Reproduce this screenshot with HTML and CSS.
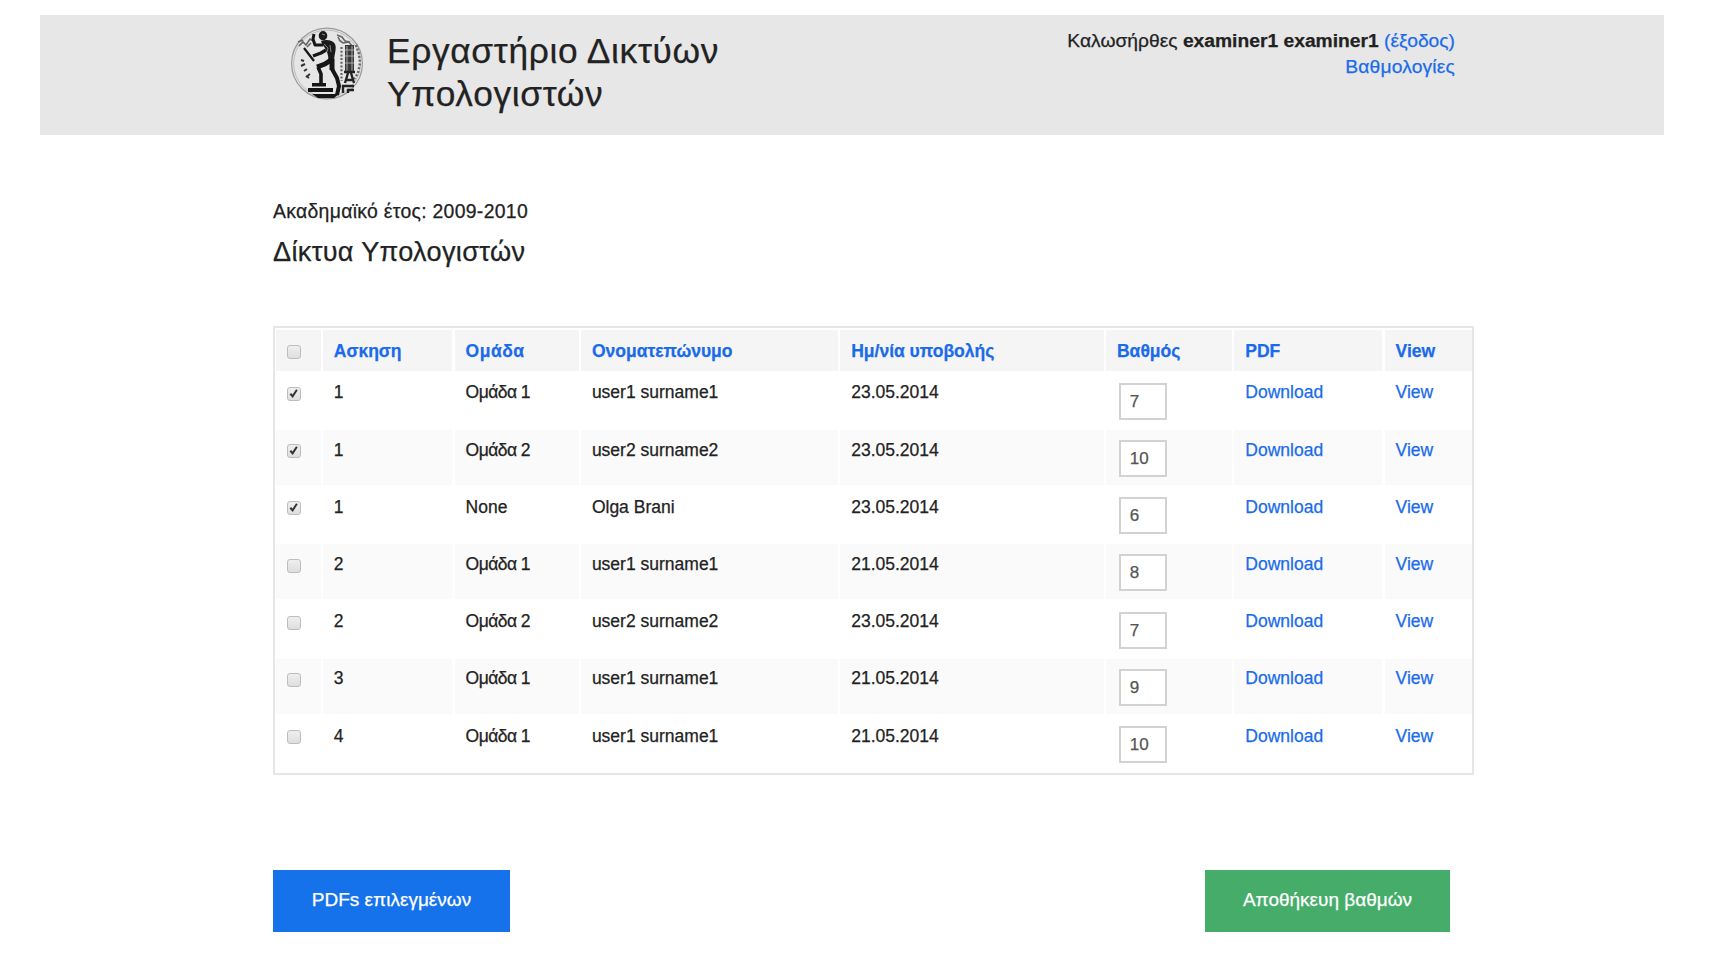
FILE: index.html
```html
<!DOCTYPE html>
<html lang="el">
<head>
<meta charset="utf-8">
<title>Εργαστήριο Δικτύων Υπολογιστών</title>
<link rel="stylesheet" href="styles.css">
</head>
<body>
<header class="masthead">
  <svg class="seal" viewBox="0 0 74 74" aria-hidden="true">
    <circle cx="37" cy="36.500" r="35.400" fill="#e6e6e6" stroke="#999" stroke-width="1.200"/>
    <circle cx="37" cy="36.500" r="33.400" fill="none" stroke="#b0b0b0" stroke-width=".8"/>
    <g fill="none" stroke="#666" stroke-width="1.600">
      <path d="M9 19l4-4 3 3 4-6 3 2M8 15l5-2M17 20l4-4M47 8l5 2 3 4 5 1M49 13l4 3 6-1 3 4M48 10l2 4"/>
      <path d="M11 33l3 1M11 39l4-2M14 44l3-2M16 50l4-3M19 51l-3-2" stroke="#333" stroke-width="2"/>
      <path d="M51.500 20v34" stroke-dasharray="2 1.700" stroke-width="2.200"/>
      <path d="M66 18l3 9 1 9-2 10-4 6" stroke-dasharray="2 1.800" stroke-width="2.400"/>
    </g>
    <path d="M55 18h9v27h-9z" fill="#383838"/>
    <path d="M57 19v25M62 19v25M55 23h9M55 29h9M55 36h9" stroke="#aaa" fill="none"/>
    <path d="M54 45h11M58 46l-3 10M61 46l3 10M55 53h9M53 66v-7h11M58 66v-3h6" stroke="#222" stroke-width="2.400" fill="none"/>
    <ellipse cx="33" cy="8.700" rx="4.300" ry="4.600" fill="#1b1b1b"/>
    <path d="M31 14c5-2 12-1 14 3 2 5-1 10-1 18l-6 2c1-6 0-10-2-14-1-3-4-5-5-9z" fill="#1b1b1b"/>
    <g fill="none" stroke="#161616" stroke-linejoin="round">
      <path d="M24 7l-1 5 2 6 8 0" stroke-width="3"/>
      <path d="M36 23l-5 3-8 3" stroke-width="3.400"/>
      <path d="M14 21l10 13" stroke-width="2.200"/>
      <path d="M41 33l-6 4-8 3" stroke-width="5"/>
      <path d="M28 40l3 7 0 9" stroke-width="3.600"/>
      <path d="M42 32l0 11" stroke-width="5"/>
      <path d="M42 42l5 9 2 8-2 9" stroke-width="4"/>
    </g>
    <path d="M22 56h14v3.500H22zM18 61h25v4H18zM22 67h27l-5 4H28z" fill="#151515"/>
    <path d="M34 17l4 4-1 4M40 18l1 7M32 7l3 1" stroke="#888" fill="none"/>
  </svg>
  <h1 class="site-title">Εργαστήριο Δικτύων<br>Υπολογιστών</h1>
  <div class="account">
    <div>Καλωσήρθες <b>examiner1 examiner1</b> <a href="#">(έξοδος)</a></div>
    <div><a class="grades-link" href="#">Βαθμολογίες</a></div>
  </div>
</header>
<main class="content">
  <p class="year">Ακαδημαϊκό έτος: 2009-2010</p>
  <h2 class="course">Δίκτυα Υπολογιστών</h2>
  <div class="grid" id="grid"></div>
  <div class="actions">
    <button class="btn btn-blue">PDFs επιλεγμένων</button>
    <button class="btn btn-green">Αποθήκευη βαθμών</button>
  </div>
</main>
<script src="app.js"></script>
</body>
</html>
```
FILE: styles.css
```css
* { box-sizing: border-box; }
body { margin: 0; padding-top: 15px; background: #fff; color: #222; font: 17.5px/26px "Liberation Sans", Arial, sans-serif; -webkit-text-stroke: .25px; }
a { color: #1a6bea; text-decoration: none; }
h1, h2, p { margin: 0; font-weight: normal; }
.masthead { display: flex; margin: 0 52px 0 40px; height: 120px; padding: 11px 209px 0 250px; background: #e7e7e7; }
.seal { width: 74px; height: 74px; margin-top: 1px; flex: none; }
.site-title { margin: 3px 0 0 23px; font-size: 35.3px; line-height: 43px; letter-spacing: .67px; white-space: nowrap; }
.account { margin-left: auto; padding-top: 2px; font-size: 19.25px; text-align: right; white-space: nowrap; }
.grades-link { letter-spacing: .17px; }
.content { padding: 63px 242px 0 273px; }
.year { height: 34px; font-size: 19.4px; letter-spacing: .3px; }
.course { font-size: 27.1px; line-height: 39px; letter-spacing: .33px; }
.grid { display: grid; grid-template-columns: 44.5px 129.5px 124px 257px 263.5px 126px 148px 87px; grid-template-rows: 41px; grid-auto-rows: 54.9px; gap: 2.3px; margin-top: 55px; padding: 1.5px 1px 0; height: 449px; width: 1201px; border: 2px solid #e6e6e6; white-space: nowrap; }
.cell { padding: 6.7px 0 0 11px; }
.head { background: #f5f5f5; color: #1a6bea; font-weight: bold; padding-top: 8px; }
.alt { background: #fafafa; }
.group { letter-spacing: -.55px; }
.head .group { letter-spacing: .5px; }
.check { display: flex; width: 14px; height: 14px; margin-top: 7.5px; border: 1.5px solid #bdbdbd; border-radius: 3px; background: linear-gradient(#efefef, #dedede); }
.check svg { width: 11px; height: 11px; }
.grade { display: block; width: 48px; height: 37px; margin: 3.3px 0 0 1.7px; padding: 4px 0 0 9px; border: 2px solid #d2d2d2; background: #fff; color: #555; font-size: 17px; letter-spacing: .2px; }
.actions { display: flex; justify-content: space-between; width: 1177px; margin-top: 95px; }
.btn { height: 62px; border: 0; padding: 0 0 2px; color: #fff; font: 19px "Liberation Sans", Arial, sans-serif; -webkit-text-stroke: .25px; }
.btn-blue { width: 237px; background: #1672eb; }
.btn-green { width: 245px; background: #45ad69; }
```
FILE: app.js
```js
const headers = ["", "Ασκηση", '<span class="group">Ομάδα</span>', "Ονοματεπώνυμο", "Ημ/νία υποβολής", "Βαθμός", "PDF", "View"];
const rows = [
  [true, "1", "Ομάδα 1", "user1 surname1", "23.05.2014", "7"],
  [true, "1", "Ομάδα 2", "user2 surname2", "23.05.2014", "10"],
  [true, "1", "None", "Olga Brani", "23.05.2014", "6"],
  [false, "2", "Ομάδα 1", "user1 surname1", "21.05.2014", "8"],
  [false, "2", "Ομάδα 2", "user2 surname2", "23.05.2014", "7"],
  [false, "3", "Ομάδα 1", "user1 surname1", "21.05.2014", "9"],
  [false, "4", "Ομάδα 1", "user1 surname1", "21.05.2014", "10"]
];
const tick = '<svg viewBox="0 0 11 11"><path d="M2.300 5.800l2.300 2.500 4.300-6.600" fill="none" stroke="#333" stroke-width="2"/></svg>';
const box = on => `<span class="check">${on ? tick : ""}</span>`;
let html = headers.map((h, i) => `<div class="cell head">${i ? h : box(false)}</div>`).join("");
rows.forEach(([on, exercise, group, person, date, grade], n) => {
  const groupCell = group === "None" ? group : `<span class="group">${group}</span>`;
  const cells = [box(on), exercise, groupCell, person, date, `<span class="grade">${grade}</span>`,
    '<a href="#">Download</a>', '<a href="#">View</a>'];
  html += cells.map(c => `<div class="cell${n % 2 ? " alt" : ""}">${c}</div>`).join("");
});
document.getElementById("grid").innerHTML = html;
```
